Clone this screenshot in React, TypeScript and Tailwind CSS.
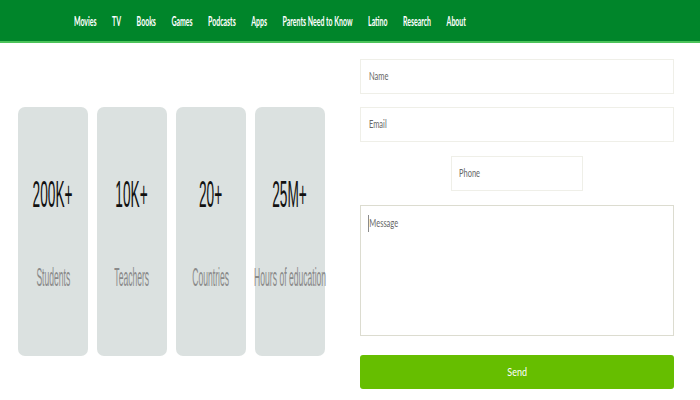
import React from "react";

const navItems = ["Movies", "TV", "Books", "Games", "Podcasts", "Apps", "Parents Need to Know", "Latino", "Research", "About"];

const stats = [
  { n: "200K+", l: "Students" },
  { n: "10K+", l: "Teachers" },
  { n: "20+", l: "Countries" },
  { n: "25M+", l: "Hours of education" },
];

export default function App() {
  return (
    <div className="w-[700px] h-[400px] bg-white overflow-hidden" style={{ fontFamily: "Lato, 'Liberation Sans', sans-serif" }}>
      <div className="h-[43px] bg-[#00852a] border-b-2 border-[#4cc35a] flex items-center pl-[74px] pt-[2px]">
        <div className="flex gap-[29px] origin-left scale-x-[0.535] text-white text-[13px] font-bold whitespace-nowrap">
          {navItems.map((t) => (
            <span key={t}>{t}</span>
          ))}
        </div>
      </div>
      <div className="flex">
        <div className="w-[360px] flex gap-[9px] pl-[18px] pt-[64px]">
          {stats.map((s) => (
            <div key={s.n} className="w-[70px] h-[249px] rounded-[7px] bg-[#dbe1e0] flex flex-col items-center pt-[70px]" style={{ fontFamily: "'Liberation Sans', sans-serif" }}>
              <div className="h-[36px] flex items-center justify-center">
                <span className="block scale-x-[0.38] text-[#111] text-[36px] leading-none whitespace-nowrap">{s.n}</span>
              </div>
              <div className="h-[30px] mt-[49px] flex items-center justify-center">
                <span className="block scale-x-[0.33] text-[#8a8a8a] text-[26px] leading-none whitespace-nowrap">{s.l}</span>
              </div>
            </div>
          ))}
        </div>
        <div className="w-[314px] pt-[16px] flex flex-col items-center text-[11px] text-[#666]">
          <div className="w-full h-[35px] border border-[#efefe8] flex items-center px-[8px]">
            <span className="origin-left scale-x-[0.68]">Name</span>
          </div>
          <div className="w-full h-[35px] border border-[#efefe8] flex items-center px-[8px] mt-[13px]">
            <span className="origin-left scale-x-[0.68]">Email</span>
          </div>
          <div className="w-[132px] h-[35px] border border-[#efefe8] flex items-center px-[7px] mt-[14px]">
            <span className="origin-left scale-x-[0.68]">Phone</span>
          </div>
          <div className="w-full h-[131px] border border-[#dcdcd0] px-[7px] pt-[9px] mt-[14px]">
            <span className="inline-block origin-left scale-x-[0.68] border-l border-[#555] pl-[1px]">Message</span>
          </div>
          <div className="w-full h-[34px] rounded-[3px] bg-[#66be00] text-white text-[12px] flex items-center justify-center mt-[19px]">
            <span className="scale-x-[0.75]">Send</span>
          </div>
        </div>
      </div>
    </div>
  );
}
